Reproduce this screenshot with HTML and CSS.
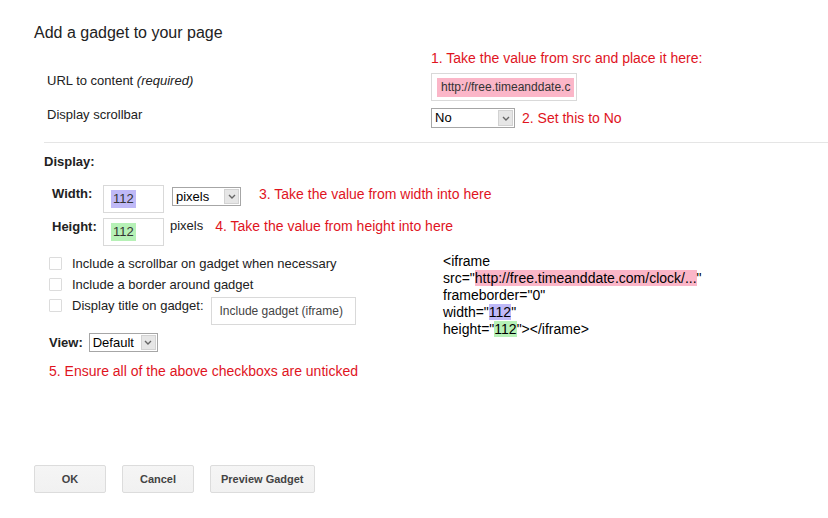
FILE: index.html
```html
<!DOCTYPE html>
<html lang="en">
<head>
  <meta charset="UTF-8">
  <title>Add a gadget to your page</title>
  <link rel="stylesheet" href="styles.css">
</head>
<body>

  <div class="dialog">
    <h1 class="dialog-title">Add a gadget to your page</h1>

    <!-- URL + scrollbar -->
    <div class="top-grid">
      <div></div>
      <div class="note">1. Take the value from src and place it here:</div>

      <div class="label">URL to content <i>(required)</i></div>
      <div class="text-input url-input"><span class="url-value hl-pink">http://free.timeanddate.c</span></div>

      <div class="label label-scroll">Display scrollbar</div>
      <div class="inline-row">
        <span class="select select-no">
          <span class="select-value">No</span>
          <span class="select-arrow"><svg width="8" height="5" viewBox="0 0 8 5"><path d="M1 1l3 3 3-3" fill="none" stroke="#666" stroke-width="1.4"/></svg></span>
        </span>
        <span class="note">2. Set this to No</span>
      </div>
    </div>

    <div class="display-section">
      <div class="section-title">Display:</div>

      <div class="size-row">
        <span class="size-label">Width:</span>
        <div class="text-input size-input"><span class="hl hl-purple">112</span></div>
        <span class="select select-pixels">
          <span class="select-value">pixels</span>
          <span class="select-arrow"><svg width="8" height="5" viewBox="0 0 8 5"><path d="M1 1l3 3 3-3" fill="none" stroke="#666" stroke-width="1.4"/></svg></span>
        </span>
        <span class="note note-width">3. Take the value from width into here</span>
      </div>

      <div class="size-row">
        <span class="size-label">Height:</span>
        <div class="text-input size-input"><span class="hl hl-green">112</span></div>
        <span class="unit">pixels</span>
        <span class="note note-height">4. Take the value from height into here</span>
      </div>

      <div class="options">
        <div class="options-left">
          <div class="check-row"><span class="checkbox"></span>Include a scrollbar on gadget when necessary</div>
          <div class="check-row"><span class="checkbox"></span>Include a border around gadget</div>
          <div class="check-row"><span class="checkbox"></span>Display title on gadget:
            <div class="text-input title-input">Include gadget (iframe)</div>
          </div>

          <div class="view-row">
            <span class="view-label">View:</span>
            <span class="select select-view">
              <span class="select-value">Default</span>
              <span class="select-arrow"><svg width="8" height="5" viewBox="0 0 8 5"><path d="M1 1l3 3 3-3" fill="none" stroke="#666" stroke-width="1.4"/></svg></span>
            </span>
          </div>

          <div class="note note-5">5. Ensure all of the above checkboxs are unticked</div>
        </div>

        <div class="code">
          &lt;iframe<br>
          src="<span class="hl-pink">http://free.timeanddate.com/clock/...</span>"<br>
          frameborder="0"<br>
          width="<span class="hl-purple">112</span>"<br>
          height="<span class="hl-green">112</span>"&gt;&lt;/iframe&gt;
        </div>
      </div>
    </div>

    <div class="buttons">
      <button class="btn btn-small">OK</button>
      <button class="btn btn-small">Cancel</button>
      <button class="btn">Preview Gadget</button>
    </div>
  </div>

</body>
</html>
```

FILE: styles.css
```css
/* Reset */
* {
  margin: 0;
  padding: 0;
  box-sizing: border-box;
}

body {
  font-family: 'Liberation Sans', Arial, sans-serif;
  background: #fff;
  color: #222;
  font-size: 13px;
}

.dialog {
  padding-top: 23px;
}

.dialog-title {
  font-size: 16px;
  font-weight: normal;
  line-height: 20px;
  margin-left: 34px;
  color: #222;
}

/* top part */
.top-grid {
  display: grid;
  grid-template-columns: 384px auto;
  row-gap: 7px;
  margin: 7px 0 0 47px;
  align-items: start;
}

.label {
  line-height: 16px;
}

.label-scroll {
  margin-top: -1px;
}

.note {
  color: #e0141e;
  font-size: 14px;
  line-height: 16px;
}

.inline-row {
  display: flex;
  align-items: center;
  gap: 7px;
}

.text-input {
  border: 1px solid #d9d9d9;
  background: #fff;
  height: 28px;
  display: flex;
  align-items: center;
  overflow: hidden;
  white-space: nowrap;
}

.url-input {
  width: 146px;
  padding-left: 5px;
  font-size: 12px;
  color: #333;
}

.url-value {
  width: 137px;
  padding-left: 4px;
  line-height: 19px;
  overflow: hidden;
}

.hl {
  padding: 0 2px;
  line-height: 18px;
}

.hl-pink {
  background: #fbb6c8;
}

.hl-purple {
  background: #bfb9f7;
}

.hl-green {
  background: #b6f1b6;
}

/* fake select boxes */
.select {
  display: inline-flex;
  border: 1px solid #a6a6a6;
  background: #fff;
  height: 20px;
}

.select-value {
  flex: 1;
  padding-left: 3px;
  line-height: 18px;
  font-size: 13px;
  color: #000;
}

.select-arrow {
  width: 15px;
  margin: 1px;
  background: #e6e6e6;
  border: 1px solid #d2d2d2;
  display: flex;
  align-items: center;
  justify-content: center;
}

.select-no {
  width: 84px;
}

.select-pixels,
.select-view {
  width: 69px;
  height: 19px;
}

.select-pixels .select-value,
.select-view .select-value {
  line-height: 17px;
}

/* display section */
.display-section {
  border-top: 1px solid #e5e5e5;
  margin: 14px 0 0 44px;
}

.section-title {
  font-weight: bold;
  line-height: 16px;
  margin-top: 11px;
}

.size-row {
  display: flex;
  align-items: flex-start;
  padding-left: 8px;
  margin-top: 5px;
}

.section-title + .size-row {
  margin-top: 15px;
}

.size-label {
  width: 51px;
  font-weight: bold;
  line-height: 16px;
  margin-top: 1px;
}

.size-input {
  width: 61px;
  padding-left: 7px;
  font-size: 13px;
  color: #333;
}

.size-row .select {
  margin: 2px 0 0 8px;
}

.note-width {
  margin: 1px 0 0 18px;
}

.unit {
  margin-left: 6px;
  line-height: 16px;
}

.note-height {
  margin-left: 12px;
}

.options {
  display: flex;
  margin-top: 10px;
}

.options-left {
  width: 399px;
  padding-left: 5px;
}

.check-row {
  display: flex;
  align-items: flex-start;
  line-height: 16px;
  margin-bottom: 5px;
}

.checkbox {
  width: 13px;
  height: 13px;
  border: 1px solid #dcdcdc;
  border-radius: 1px;
  margin: 1px 10px 0 0;
  flex-shrink: 0;
}

.title-input {
  width: 145px;
  margin: -1px 0 0 7px;
  padding-left: 8px;
  font-size: 12px;
  color: #444;
}

.view-row {
  display: flex;
  align-items: center;
  gap: 6px;
  margin-top: 8px;
}

.view-label {
  font-weight: bold;
  line-height: 16px;
}

.note-5 {
  margin-top: 11px;
}

.code {
  margin-top: -3px;
  font-size: 14px;
  line-height: 17px;
  color: #000;
}

/* buttons */
.buttons {
  display: flex;
  gap: 16px;
  margin: 86px 0 0 34px;
}

.btn {
  height: 28px;
  padding: 0 10px;
  font-family: 'Liberation Sans', Arial, sans-serif;
  font-size: 11px;
  font-weight: bold;
  color: #444;
  background: linear-gradient(#f5f5f5, #f1f1f1);
  border: 1px solid #dcdcdc;
  border-radius: 2px;
  cursor: pointer;
}

.btn-small {
  width: 72px;
}
```
